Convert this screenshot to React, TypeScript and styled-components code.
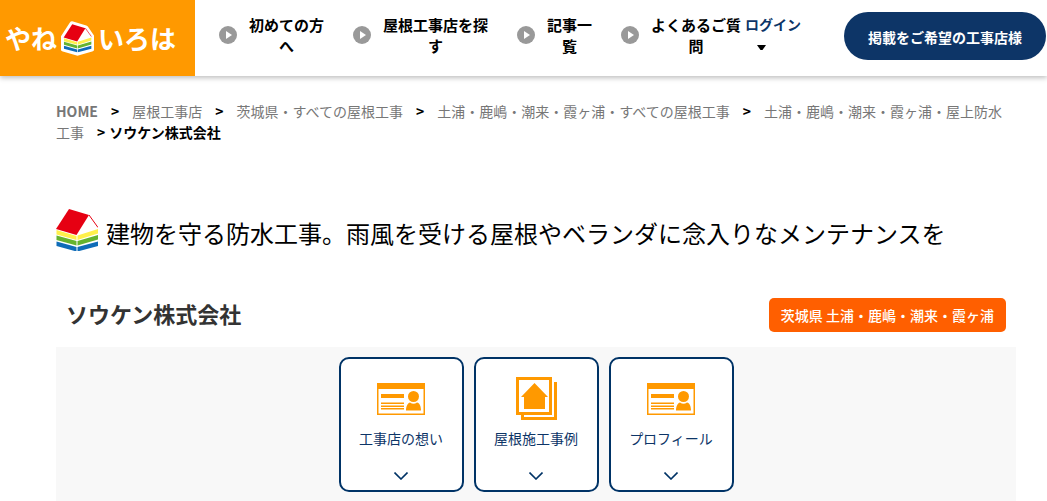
import React from "react";
import styled, { createGlobalStyle } from "styled-components";

const navy = "#0d3567";
const orange = "#ff9900";

const GlobalStyle = createGlobalStyle`
  *, *::before, *::after { box-sizing: border-box; }
  body {
    margin: 0;
    background: #fff;
    color: #000;
    font-family: "Noto Sans CJK JP", "Noto Sans", sans-serif;
    font-size: 14px;
    line-height: 21px;
  }
  a { color: inherit; text-decoration: none; }
  h1, h2, p, ul, ol { margin: 0; padding: 0; }
  ul, ol { list-style: none; }
  svg { display: block; flex: none; }
`;

const Header = styled.header`
  display: flex;
  align-items: flex-start;
  min-height: 76px;
  padding-right: 1px;
  background: #fff;
  box-shadow: 0 2px 5px rgba(0, 0, 0, 0.25);
`;

const Brand = styled.a`
  display: flex;
  flex: none;
  align-items: center;
  align-self: stretch;
  gap: 4px;
  width: 195px;
  padding-left: 5px;
  background: ${orange};
  color: #fff;
  font-size: 26px;
  font-weight: 700;
  line-height: 40px;
`;

const Nav = styled.nav`
  flex: none;
  margin: 14px 0 0 24px;
`;

const NavList = styled.ul`
  display: flex;
  gap: 29px;
`;

const NavLink = styled.a<{ $chars: number }>`
  display: flex;
  align-items: center;
  gap: 12px;
  font-size: 15px;
  font-weight: 700;
  text-align: center;

  span { width: ${(p) => p.$chars}em; }
`;

const LoginButton = styled.button`
  display: flex;
  flex: none;
  flex-direction: column;
  align-items: flex-start;
  margin: 14px auto 0 4px;
  padding: 0;
  border: 0;
  background: none;
  color: ${navy};
  font: inherit;
  font-weight: 700;
  cursor: pointer;
`;

const CaretSlot = styled.span`
  display: flex;
  align-items: center;
  height: 24px;
  padding-left: 12px;
`;

const CtaLink = styled.a`
  flex: none;
  margin-top: 12px;
  padding: 15px 24px 12px;
  border-radius: 24px;
  background: ${navy};
  color: #fff;
  font-weight: 700;
`;

const Main = styled.main`
  padding: 25px 31px 0 56px;
`;

const Crumbs = styled.ol`
  padding-right: 8px;
  color: #777;

  li { display: inline; }
  b { color: #000; font-weight: 700; }
`;

const Separator = styled.span<{ $last?: boolean }>`
  margin: 0 ${(p) => (p.$last ? 4 : 13)}px 0 13px;
  color: #000;
  font-weight: 700;
`;

const HomeLink = styled.a`
  font-weight: 700;
`;

const Headline = styled.h1`
  display: flex;
  align-items: flex-end;
  gap: 8px;
  margin-top: 66px;
  font-size: 24px;
  font-weight: 400;
  line-height: 36px;
`;

const CompanyRow = styled.div`
  display: flex;
  align-items: flex-start;
  justify-content: space-between;
  margin-top: 47px;
  padding: 0 10px;
`;

const CompanyName = styled.h2`
  color: #333;
  font-size: 22px;
  font-weight: 700;
  line-height: 30px;
`;

const AreaTag = styled.p`
  padding: 7px 12px 6px;
  border-radius: 5px;
  background: #ff5f00;
  color: #fff;
  font-weight: 500;
`;

const Panel = styled.nav`
  display: flex;
  justify-content: center;
  gap: 10px;
  margin-top: 15px;
  padding: 10px 0;
  background: #f8f8f8;
`;

const Card = styled.a`
  display: flex;
  flex-direction: column;
  align-items: center;
  width: 125px;
  height: 135px;
  padding-top: 17px;
  border: 2px solid #003366;
  border-radius: 10px;
  background: #fff;
  color: ${navy};
`;

const CardIcon = styled.span`
  display: flex;
  align-items: center;
  height: 45px;
  margin-bottom: 7px;
`;

const CardLabel = styled.span`
  margin-bottom: 23px;
`;

function House({ width, height, outlined }: { width: number; height: number; outlined?: boolean }) {
  return (
    <svg width={width} height={height} viewBox={outlined ? "-4 -5 50 53" : "0 0 42 42"} aria-hidden="true">
      {outlined && (
        <path d="M13 0L33 6L42 19V37L21 43L0 37V20Z" fill="#fff" stroke="#fff" strokeWidth="9" strokeLinejoin="round" />
      )}
      <path d="M13 0L33 6L20.500 26L0 20Z" fill="#e60012" />
      <path d="M33 6L42 18.500" stroke="#e60012" strokeWidth="1" fill="none" />
      <path d="M0.500 21L20.500 27V31L0.500 25.500ZM21.500 26.500L42 20V24.500L21.500 31Z" fill="#fff04b" />
      <path d="M0.500 26.500L20.500 32V36.500L0.500 31ZM21.500 32L42 26V30.500L21.500 36.500Z" fill="#65b32e" />
      <path d="M0.500 32.500L20.500 38V42.500L0.500 37ZM21.500 38L42 32.500V37L21.500 42.500Z" fill="#0f6cb8" />
    </svg>
  );
}

function PlayIcon() {
  return (
    <svg width="18" height="18" viewBox="0 0 18 18" aria-hidden="true">
      <circle cx="9" cy="9" r="9" fill="#999" />
      <path d="M7 5L13 9L7 13Z" fill="#fff" />
    </svg>
  );
}

function ProfileIcon() {
  return (
    <svg width="48" height="32" viewBox="0 0 48 32" aria-hidden="true">
      <rect x="0.750" y="0.750" width="46.500" height="30.500" fill="#fff" stroke={orange} strokeWidth="1.500" />
      <path d="M0 0H48V6H0ZM4 11H27V15H4ZM4 19.500H27V21H4ZM4 22.500H27V24H4ZM4 25H27V26.500H4Z" fill={orange} />
      <circle cx="36.500" cy="13.500" r="5.500" fill={orange} />
      <path d="M29 27.500C29 23 31 20 33 19.500Q36.500 22 40 19.500C42.500 20 44 23 44 27.500Z" fill={orange} />
    </svg>
  );
}

function GalleryIcon() {
  return (
    <svg width="41" height="43" viewBox="0 0 41 43" aria-hidden="true">
      <path d="M38 5H41V43H5V38H8V40H38Z" fill={orange} />
      <rect x="1.500" y="1.500" width="33" height="35" fill="#fff" stroke={orange} strokeWidth="3" />
      <path d="M18.500 6L32 20H29V32H8V20H5Z" fill={orange} />
    </svg>
  );
}

function Chevron() {
  return (
    <svg width="14" height="8" viewBox="0 0 14 8" aria-hidden="true">
      <path d="M0.500 0.500L7 7L13.500 0.500" fill="none" stroke="#003366" strokeWidth="1.600" />
    </svg>
  );
}

const navItems = [
  { label: "初めての方へ", chars: 5 },
  { label: "屋根工事店を探す", chars: 7 },
  { label: "記事一覧", chars: 3 },
  { label: "よくあるご質問", chars: 6 },
];

const crumbs = [
  "屋根工事店",
  "茨城県・すべての屋根工事",
  "土浦・鹿嶋・潮来・霞ヶ浦・すべての屋根工事",
  "土浦・鹿嶋・潮来・霞ヶ浦・屋上防水工事",
];

const cards = [
  { label: "工事店の想い", icon: <ProfileIcon /> },
  { label: "屋根施工事例", icon: <GalleryIcon /> },
  { label: "プロフィール", icon: <ProfileIcon /> },
];

export default function App() {
  return (
    <>
      <GlobalStyle />
      <Header>
        <Brand href="#">
          <span>やね</span>
          <House width={33} height={35} outlined />
          <span>いろは</span>
        </Brand>
        <Nav>
          <NavList>
            {navItems.map((item) => (
              <li key={item.label}>
                <NavLink href="#" $chars={item.chars}>
                  <PlayIcon />
                  <span>{item.label}</span>
                </NavLink>
              </li>
            ))}
          </NavList>
        </Nav>
        <LoginButton type="button">
          ログイン
          <CaretSlot>
            <svg width="9" height="5" viewBox="0 0 9 5" aria-hidden="true">
              <path d="M0 0H9L5.500 5H3.500Z" fill="#000" />
            </svg>
          </CaretSlot>
        </LoginButton>
        <CtaLink href="#">掲載をご希望の工事店様</CtaLink>
      </Header>
      <Main>
        <Crumbs>
          <li>
            <HomeLink href="#">HOME</HomeLink>
          </li>
          {crumbs.map((crumb) => (
            <li key={crumb}>
              <Separator>&gt;</Separator>
              <a href="#">{crumb}</a>
            </li>
          ))}
          <li>
            <Separator $last>&gt;</Separator>
            <b>ソウケン株式会社</b>
          </li>
        </Crumbs>
        <Headline>
          <House width={42} height={42} />
          建物を守る防水工事。雨風を受ける屋根やベランダに念入りなメンテナンスを
        </Headline>
        <CompanyRow>
          <CompanyName>ソウケン株式会社</CompanyName>
          <AreaTag>茨城県 土浦・鹿嶋・潮来・霞ヶ浦</AreaTag>
        </CompanyRow>
        <Panel>
          {cards.map((card) => (
            <Card href="#" key={card.label}>
              <CardIcon>{card.icon}</CardIcon>
              <CardLabel>{card.label}</CardLabel>
              <Chevron />
            </Card>
          ))}
        </Panel>
      </Main>
    </>
  );
}
